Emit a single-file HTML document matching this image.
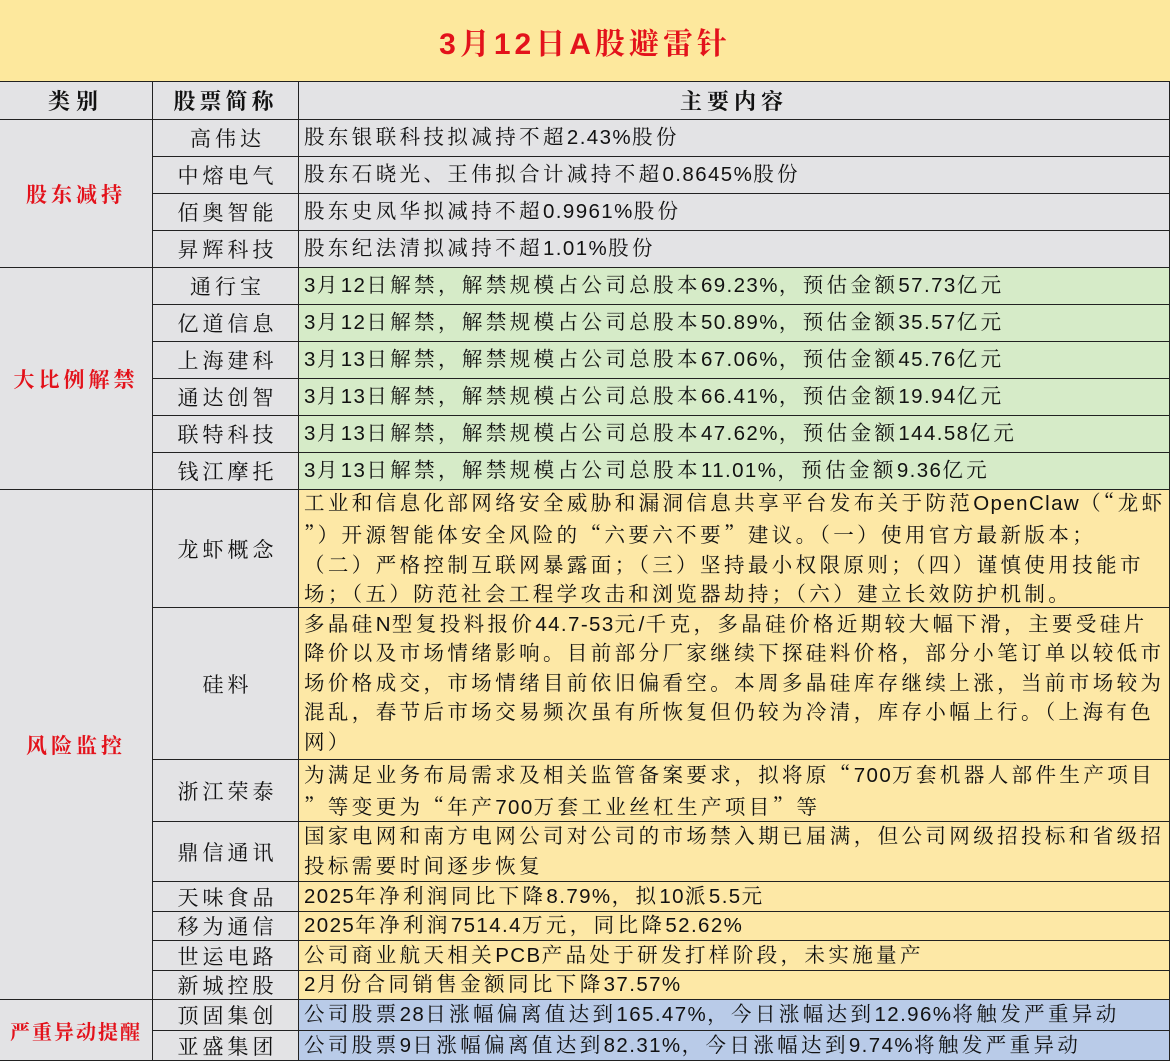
<!DOCTYPE html>
<html><head><meta charset="utf-8"><style>
*{margin:0;padding:0;box-sizing:border-box}
body{width:1170px;height:1062px;background:#fff;position:relative;overflow:hidden;font-family:"Liberation Sans","Noto Serif CJK SC",serif;color:#111}
.c{position:absolute;border-right:1.5px solid #222;border-bottom:1.5px solid #222;display:flex;align-items:center;overflow:hidden;white-space:nowrap}
.g{background:#e3e3e5}
.n{justify-content:center;font-size:21px;letter-spacing:4px;padding-left:4px}
.t{padding-left:5px;font-size:20.5px;letter-spacing:3.4px;line-height:29.6px}
.t i{font-style:normal;letter-spacing:1.4px}
.q{font-family:"Noto Serif CJK SC",serif}
.gr{background:#d6ebc8}.ye{background:#fde8a6}.bl{background:#b9cbe8}
.cat{justify-content:center;color:#e3121b;font-weight:bold;font-size:21px;letter-spacing:4px}
</style></head><body>
<div style="position:absolute;left:0;top:0;width:1170px;height:82px;background:#fde89d;border-bottom:1.5px solid #222;display:flex;align-items:center;justify-content:center;color:#e3121b;font-weight:bold;font-size:30px;letter-spacing:4px">3月12日A股避雷针</div>
<div class="c g" style="left:0;top:82px;width:153px;height:38px;justify-content:center;font-weight:bold;font-size:22px;letter-spacing:6px">类别</div>
<div class="c g" style="left:153px;top:82px;width:146px;height:38px;justify-content:center;font-weight:bold;font-size:22px;letter-spacing:4px">股票简称</div>
<div class="c g" style="left:299px;top:82px;width:871px;height:38px;justify-content:center;font-weight:bold;font-size:22px;letter-spacing:5px">主要内容</div>

<div class="c g cat" style="left:0;top:120px;width:153px;height:148px">股东减持</div>
<div class="c g cat" style="left:0;top:268px;width:153px;height:222px">大比例解禁</div>
<div class="c g cat" style="left:0;top:490px;width:153px;height:510px">风险监控</div>
<div class="c g cat" style="left:0;top:1000px;width:153px;height:61px;font-size:20px;letter-spacing:2px">严重异动提醒</div>

<div class="c g n" style="left:153px;top:120px;width:146px;height:37px">高伟达</div>
<div class="c g n" style="left:153px;top:157px;width:146px;height:37px">中熔电气</div>
<div class="c g n" style="left:153px;top:194px;width:146px;height:37px">佰奥智能</div>
<div class="c g n" style="left:153px;top:231px;width:146px;height:37px">昇辉科技</div>
<div class="c g t" style="left:299px;top:120px;width:871px;height:37px">股东银联科技拟减持不超<i>2.43%</i>股份</div>
<div class="c g t" style="left:299px;top:157px;width:871px;height:37px">股东石晓光、王伟拟合计减持不超<i>0.8645%</i>股份</div>
<div class="c g t" style="left:299px;top:194px;width:871px;height:37px">股东史凤华拟减持不超<i>0.9961%</i>股份</div>
<div class="c g t" style="left:299px;top:231px;width:871px;height:37px">股东纪法清拟减持不超<i>1.01%</i>股份</div>

<div class="c g n" style="left:153px;top:268px;width:146px;height:37px">通行宝</div>
<div class="c g n" style="left:153px;top:305px;width:146px;height:37px">亿道信息</div>
<div class="c g n" style="left:153px;top:342px;width:146px;height:37px">上海建科</div>
<div class="c g n" style="left:153px;top:379px;width:146px;height:37px">通达创智</div>
<div class="c g n" style="left:153px;top:416px;width:146px;height:37px">联特科技</div>
<div class="c g n" style="left:153px;top:453px;width:146px;height:37px">钱江摩托</div>
<div class="c gr t" style="left:299px;top:268px;width:871px;height:37px"><i>3</i>月<i>12</i>日解禁，解禁规模占公司总股本<i>69.23%</i>，预估金额<i>57.73</i>亿元</div>
<div class="c gr t" style="left:299px;top:305px;width:871px;height:37px"><i>3</i>月<i>12</i>日解禁，解禁规模占公司总股本<i>50.89%</i>，预估金额<i>35.57</i>亿元</div>
<div class="c gr t" style="left:299px;top:342px;width:871px;height:37px"><i>3</i>月<i>13</i>日解禁，解禁规模占公司总股本<i>67.06%</i>，预估金额<i>45.76</i>亿元</div>
<div class="c gr t" style="left:299px;top:379px;width:871px;height:37px"><i>3</i>月<i>13</i>日解禁，解禁规模占公司总股本<i>66.41%</i>，预估金额<i>19.94</i>亿元</div>
<div class="c gr t" style="left:299px;top:416px;width:871px;height:37px"><i>3</i>月<i>13</i>日解禁，解禁规模占公司总股本<i>47.62%</i>，预估金额<i>144.58</i>亿元</div>
<div class="c gr t" style="left:299px;top:453px;width:871px;height:37px"><i>3</i>月<i>13</i>日解禁，解禁规模占公司总股本<i>11.01%</i>，预估金额<i>9.36</i>亿元</div>

<div class="c g n" style="left:153px;top:490px;width:146px;height:118px">龙虾概念</div>
<div class="c g n" style="left:153px;top:608px;width:146px;height:152px">硅料</div>
<div class="c g n" style="left:153px;top:760px;width:146px;height:62px">浙江荣泰</div>
<div class="c g n" style="left:153px;top:822px;width:146px;height:60px">鼎信通讯</div>
<div class="c g n" style="left:153px;top:882px;width:146px;height:30px">天味食品</div>
<div class="c g n" style="left:153px;top:912px;width:146px;height:29px">移为通信</div>
<div class="c g n" style="left:153px;top:941px;width:146px;height:30px">世运电路</div>
<div class="c g n" style="left:153px;top:971px;width:146px;height:29px">新城控股</div>
<div class="c g n" style="left:153px;top:1000px;width:146px;height:31px">顶固集创</div>
<div class="c g n" style="left:153px;top:1031px;width:146px;height:30px">亚盛集团</div>

<div class="c ye t" style="left:299px;top:490px;width:871px;height:118px"><div>工业和信息化部网络安全威胁和漏洞信息共享平台发布关于防范<i>OpenClaw</i>（<span class="q">“</span>龙虾<br><span class="q">”</span>）开源智能体安全风险的<span class="q">“</span>六要六不要<span class="q">”</span>建议。（一）使用官方最新版本；<br>（二）严格控制互联网暴露面；（三）坚持最小权限原则；（四）谨慎使用技能市<br>场；（五）防范社会工程学攻击和浏览器劫持；（六）建立长效防护机制。</div></div>
<div class="c ye t" style="left:299px;top:608px;width:871px;height:152px"><div>多晶硅<i>N</i>型复投料报价<i>44.7-53</i>元<i>/</i>千克，多晶硅价格近期较大幅下滑，主要受硅片<br>降价以及市场情绪影响。目前部分厂家继续下探硅料价格，部分小笔订单以较低市<br>场价格成交，市场情绪目前依旧偏看空。本周多晶硅库存继续上涨，当前市场较为<br>混乱，春节后市场交易频次虽有所恢复但仍较为冷清，库存小幅上行。（上海有色<br>网）</div></div>
<div class="c ye t" style="left:299px;top:760px;width:871px;height:62px"><div>为满足业务布局需求及相关监管备案要求，拟将原<span class="q">“</span><i>700</i>万套机器人部件生产项目<br><span class="q">”</span>等变更为<span class="q">“</span>年产<i>700</i>万套工业丝杠生产项目<span class="q">”</span>等</div></div>
<div class="c ye t" style="left:299px;top:822px;width:871px;height:60px"><div>国家电网和南方电网公司对公司的市场禁入期已届满，但公司网级招投标和省级招<br>投标需要时间逐步恢复</div></div>
<div class="c ye t" style="left:299px;top:882px;width:871px;height:30px"><i>2025</i>年净利润同比下降<i>8.79%</i>，拟<i>10</i>派<i>5.5</i>元</div>
<div class="c ye t" style="left:299px;top:912px;width:871px;height:29px"><i>2025</i>年净利润<i>7514.4</i>万元，同比降<i>52.62%</i></div>
<div class="c ye t" style="left:299px;top:941px;width:871px;height:30px">公司商业航天相关<i>PCB</i>产品处于研发打样阶段，未实施量产</div>
<div class="c ye t" style="left:299px;top:971px;width:871px;height:29px"><i>2</i>月份合同销售金额同比下降<i>37.57%</i></div>
<div class="c bl t" style="left:299px;top:1000px;width:871px;height:31px">公司股票<i>28</i>日涨幅偏离值达到<i>165.47%</i>，今日涨幅达到<i>12.96%</i>将触发严重异动</div>
<div class="c bl t" style="left:299px;top:1031px;width:871px;height:30px">公司股票<i>9</i>日涨幅偏离值达到<i>82.31%</i>，今日涨幅达到<i>9.74%</i>将触发严重异动</div>
</body></html>
